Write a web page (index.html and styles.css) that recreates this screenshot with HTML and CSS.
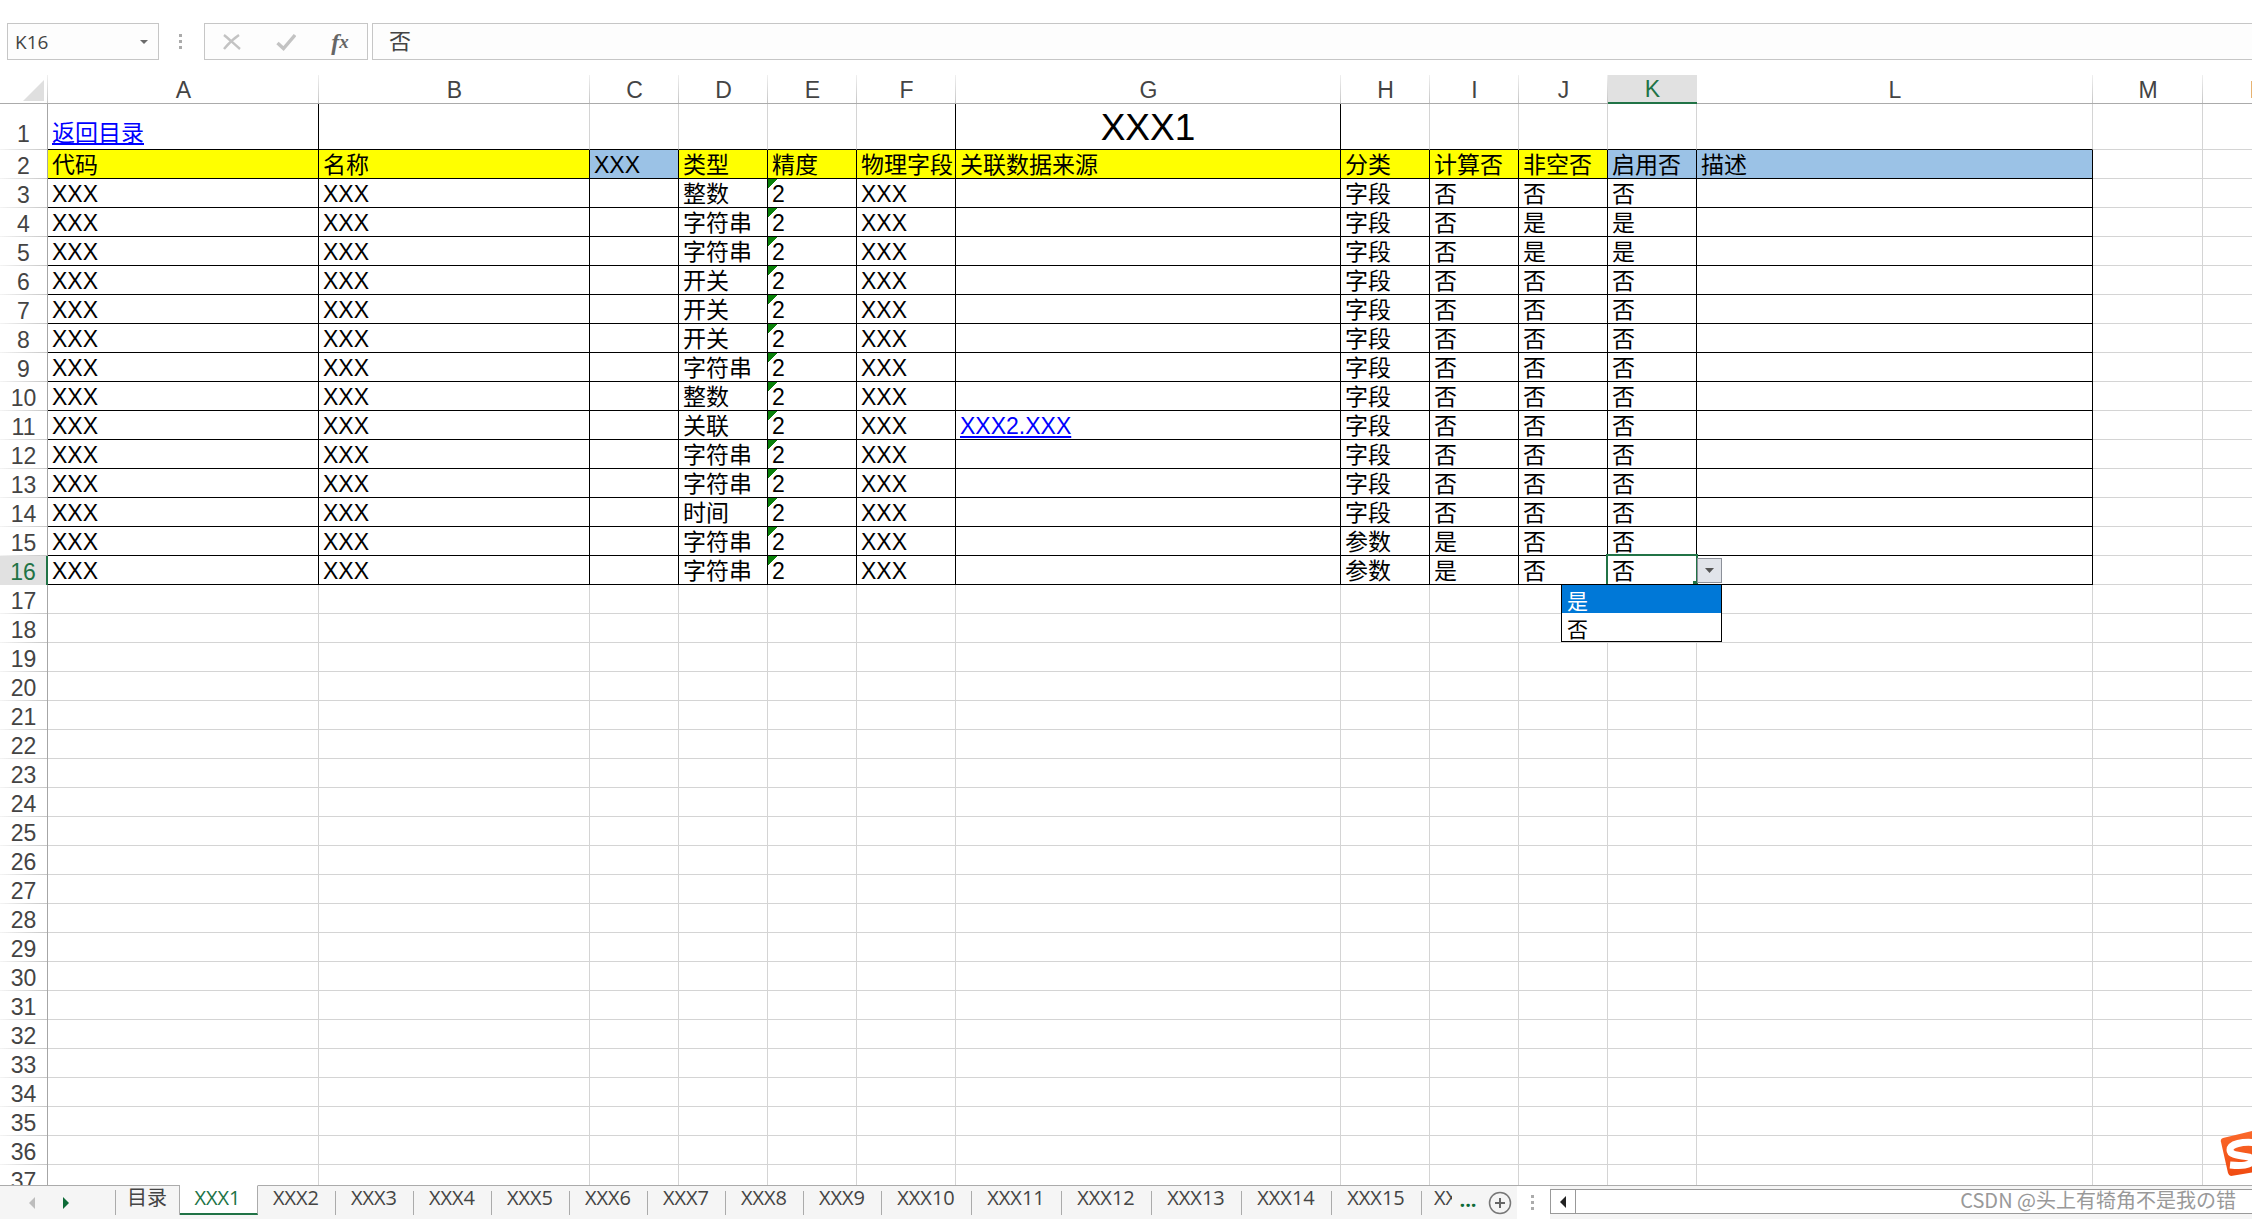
FILE: index.html
```html
<!DOCTYPE html>
<html lang="zh-CN">
<head>
<meta charset="utf-8">
<title>XXX1</title>
<link rel="stylesheet" href="styles.css">
</head>
<body>
<header class="formula-bar">
  <div class="name-box">
    <input class="name-input" type="text" value="K16" aria-label="名称框">
    <button class="name-toggle" type="button" aria-label="名称列表"><svg width="8" height="4" viewBox="0 0 8 4"><path d="M0 0h8L4 4z" fill="#6b6b6b"/></svg></button>
  </div>
  <div class="grip"><i></i><i></i><i></i></div>
  <div class="fx-buttons">
    <button class="fx-button" type="button" aria-label="取消"><svg width="20" height="18" viewBox="0 0 20 18"><path d="M2 2c5 4 10 9 16 14M17 2C11 6 6 11 2 16" fill="none" stroke="#c3c3c3" stroke-width="2.4"/></svg></button>
    <button class="fx-button" type="button" aria-label="输入"><svg width="20" height="18" viewBox="0 0 20 18"><path d="M1.500 10l6 5.500L19 2" fill="none" stroke="#c3c3c3" stroke-width="3.400"/></svg></button>
    <button class="fx-button fx-label" type="button" aria-label="插入函数">f<span class="fx-x">x</span></button>
  </div>
  <input class="formula-input" type="text" value="否" aria-label="编辑栏">
</header>

<main class="sheet">
  <table class="grid">
    <colgroup>
      <col class="w-head"><col class="w-text"><col class="w-text"><col class="w-flag"><col class="w-flag"><col class="w-flag"><col class="w-field"><col class="w-source"><col class="w-flag"><col class="w-flag"><col class="w-flag"><col class="w-flag"><col class="w-note"><col class="w-free"><col class="w-free">
    </colgroup>
    <thead><tr id="letters"></tr></thead>
    <tbody id="rows"></tbody>
  </table>
  <svg class="ime-logo" width="32" height="46" viewBox="0 0 32 46" aria-hidden="true">
    <defs><linearGradient id="ime" x1="0" y1="0" x2="0" y2="1"><stop offset="0" stop-color="#fb6a2c"/><stop offset="1" stop-color="#f04a10"/></linearGradient></defs>
    <path d="M3 8L40 -1V41L11 46Q9 46 8 43L1 12Q0 9 3 8z" fill="url(#ime)"/>
    <path d="M38 13C22 11 10 14 10 20C10 28 32 24 32 30C32 36 20 36 10 35" fill="none" stroke="#fff" stroke-width="7"/>
  </svg>
</main>

<footer class="bottom-bar">
  <nav class="tabs" aria-label="工作表">
    <div class="tab-arrows">
      <button class="plain" type="button" aria-label="上一个"><svg width="6" height="12" viewBox="0 0 6 12"><path d="M6 0v12L0 6z" fill="#bdbdbd"/></svg></button>
      <button class="plain" type="button" aria-label="下一个"><svg width="6" height="12" viewBox="0 0 6 12"><path d="M0 0v12l6-6z" fill="#0e6b38"/></svg></button>
    </div>
    <div class="tab-list" id="tabs"></div>
    <button class="plain more" type="button">...</button>
    <button class="plain add" type="button" aria-label="新工作表"><svg width="24" height="24" viewBox="0 0 24 24"><circle cx="12" cy="12" r="10.500" fill="none" stroke="#777" stroke-width="1.500"/><path d="M12 7v10M7 12h10" stroke="#666" stroke-width="2"/></svg></button>
  </nav>
  <div class="grip split"><i></i><i></i><i></i></div>
  <div class="scroll">
    <button class="scroll-left" type="button" aria-label="向左滚动"><svg width="6" height="12" viewBox="0 0 6 12"><path d="M6 0v12L0 6z" fill="#222"/></svg></button>
    <span class="watermark">CSDN @头上有犄角不是我の错</span>
  </div>
</footer>
<script src="sheet.js"></script>
</body>
</html>
```
FILE: styles.css
```css
* { box-sizing: border-box; }

body {
  margin: 0;
  height: 100vh;
  display: flex;
  flex-direction: column;
  overflow: hidden;
  background: #fff;
  color: #444;
  font-family: "Liberation Sans", "Noto Sans CJK SC", sans-serif;
}

button, input, select { font: inherit; color: inherit; margin: 0; padding: 0; border: 0; background: none; outline: 0; }
button { display: flex; align-items: center; justify-content: center; }
svg { display: block; }

/* formula bar */
.formula-bar {
  flex: none;
  display: flex;
  padding: 23px 0 15px 7px;
  font-family: "Open Sans", "Noto Sans CJK SC", sans-serif;
}
.name-box, .fx-buttons, .formula-input { height: 37px; border: 1px solid #c6c6c6; background: #fdfdfd; }
.name-box { width: 152px; display: flex; }
.name-input { flex: 1; min-width: 0; padding-left: 7px; font-size: 19px; }
.name-toggle { width: 28px; }
.grip { width: 45px; padding-right: 2px; display: flex; flex-direction: column; align-items: center; justify-content: center; gap: 3px; }
.grip i { width: 3px; height: 3px; background: #ababab; }
.fx-buttons { width: 164px; display: flex; }
.fx-button { flex: 1; }
.fx-label { font: italic bold 24px/24px "Liberation Serif", serif; color: #666; }
.fx-x { font-size: 19px; }
.formula-input { flex: 1; min-width: 0; margin-left: 4px; border-right: 0; padding: 0 0 5px 16px; font-size: 22px; }

/* grid */
.sheet { flex: 1; min-height: 0; overflow: hidden; position: relative; }
.grid { table-layout: fixed; width: 2313px; border-collapse: separate; border-spacing: 0; }
.w-head { width: 48px; }
.w-text { width: 271px; }
.w-flag { width: 89px; }
.w-field { width: 99px; }
.w-source { width: 385px; }
.w-note { width: 396px; }
.w-free { width: 110px; }

.grid th, .grid td { height: 29px; padding: 2px 0 0; white-space: nowrap; line-height: 26px; font-size: 23px; }
.grid th { font-weight: 400; text-align: center; }
.grid thead th {
  border-bottom: 1px solid #ababab;
  background: linear-gradient(#f0f0f0, #c6c6c6) right / 1px 100% no-repeat;
}
.corner svg { margin-left: 23px; }
.grid tbody th {
  border-right: 1px solid #a6a6a6;
  background: linear-gradient(to right, #f4f4f4, #c6c6c6) bottom / 100% 1px no-repeat;
}
.grid thead .current { background: #e1e1e1; color: #217346; border-bottom: 2px solid #217346; line-height: 25px; }
.grid tbody .current { background: #e1e1e1; color: #217346; border-right: 2px solid #217346; }

.grid td {
  padding-left: 4px;
  border-right: 1px solid #d4d4d4;
  border-bottom: 1px solid #d4d4d4;
  color: #000;
}
.grid .edge-b { border-bottom-color: #000; }
.grid .edge-r { border-right-color: #000; }
.grid .key { background: #ff0; }
.grid .extra { background: #9bc2e6; }
.grid .top th, .grid .top td { height: 46px; vertical-align: bottom; padding-bottom: 3px; }
.grid .top .title { vertical-align: middle; text-align: center; padding: 2px 0 0; font-size: 37px; line-height: 42px; }
.grid a { color: #00f; text-decoration: underline 2px; text-underline-offset: 2px; }
.grid .text-number { background: linear-gradient(135deg, #0a800a 7px, transparent 7px) no-repeat; }

/* active cell and its open list */
.grid .active { position: relative; }
.frame { position: absolute; inset: -2px -2px 0 -2px; border: 2px solid #217346; border-bottom: 0; }
.handle { position: absolute; right: -2px; bottom: 0; width: 5px; height: 3px; background: #217346; }
.open-list {
  position: absolute; left: 89px; top: 2px; width: 25px; height: 25px;
  border: 1px solid #8c9099; background: #e1e4ea;
}
.choices {
  position: absolute; left: -47px; top: 28px; z-index: 1;
  width: 161px; height: 58px;
  appearance: none; overflow: hidden;
  border: 1px solid #000; border-radius: 0; background: #fff;
  font-size: 21px; color: #000;
}
.choices option { height: 28px; min-height: 28px; line-height: 24px; padding: 0 0 4px 5px; }
.choices option:checked { background: #0078d7 linear-gradient(#0078d7, #0078d7); -webkit-text-fill-color: #fff; }

.ime-logo { position: absolute; right: 0; bottom: 9px; }

/* sheet tabs and scroll bar */
.bottom-bar { flex: none; height: 34px; display: flex; border-top: 1px solid #ababab; background: #f5f5f5; }
.tabs { flex: none; display: flex; font-family: "Open Sans", "Noto Sans CJK SC", sans-serif; font-size: 20px; }
.tab-arrows { width: 115px; display: flex; gap: 28px; padding-left: 29px; }
.tab-list { width: 1337px; display: flex; overflow: hidden; margin-top: -1px; }
.tab {
  flex: none; width: 78px; height: 30px; padding-right: 2px; display: block;
  line-height: 24px; text-align: center; text-decoration: none; color: #444;
  background: linear-gradient(#ababab, #ababab) right 5px / 1px 25px no-repeat;
  border-top: 1px solid #ababab;
}
.tab.wide { width: 90px; }
.tab.cut { width: 30px; padding: 0 0 0 12px; background: none; text-align: left; }
.tab.index { width: 65px; padding: 0; background: linear-gradient(#ababab, #ababab) left 4px / 1px 25px no-repeat; border-right: 1px solid #ababab; }
.tab.on { color: #217346; background: #fff; border-top-color: #fff; border-right: 1px solid #ababab; border-bottom: 2px solid #217346; }
.plain { flex: none; }
.more { width: 32px; padding-bottom: 6px; color: #0e6b38; font-weight: 700; }
.add { width: 33px; padding-right: 1px; }
.split { width: 33px; background: #fff; }
.scroll {
  flex: 1; min-width: 0; height: 25px; margin-top: 3px; display: flex; align-items: center; justify-content: space-between;
  border: 1px solid #999; border-right: 0; background: #fff; padding-right: 16px;
}
.scroll-left { width: 25px; height: 23px; border-right: 1px solid #999; }
.watermark { font-size: 20px; line-height: 23px; padding-bottom: 4px; color: #999; font-family: "Noto Sans CJK SC", sans-serif; }
```
FILE: sheet.js
```js
const LETTERS = "ABCDEFGHIJKLMN".split("");
const ROW_COUNT = 37;
const LAST_COL = 11; // column L closes the bordered table
const HEADINGS = ["代码", "名称", "XXX", "类型", "精度", "物理字段", "关联数据来源", "分类", "计算否", "非空否", "启用否", "描述"];
const EXTRA = [2, 10, 11];

// type, category, calculated, required, enabled
const FIELDS = [
  ["整数", "字段", "否", "否", "否"],
  ["字符串", "字段", "否", "是", "是"],
  ["字符串", "字段", "否", "是", "是"],
  ["开关", "字段", "否", "否", "否"],
  ["开关", "字段", "否", "否", "否"],
  ["开关", "字段", "否", "否", "否"],
  ["字符串", "字段", "否", "否", "否"],
  ["整数", "字段", "否", "否", "否"],
  ["关联", "字段", "否", "否", "否"],
  ["字符串", "字段", "否", "否", "否"],
  ["字符串", "字段", "否", "否", "否"],
  ["时间", "字段", "否", "否", "否"],
  ["字符串", "参数", "是", "否", "否"],
  ["字符串", "参数", "是", "否", "否"]
];

const PICKER = `<span class="frame"></span><span class="handle"></span>
<button class="open-list" type="button" aria-label="打开列表"><svg width="9" height="5" viewBox="0 0 9 5"><path d="M0 0h9L4.500 5z" fill="#555"/></svg></button>
<select class="choices" size="2" aria-label="启用否"><option selected>是</option><option>否</option></select>`;

function cell(row, col) {
  const classes = [];
  let html = "";
  if (row === 1) {
    if (col <= LAST_COL) classes.push("edge-b");
    if ([0, 5, 6].includes(col)) classes.push("edge-r");
    if (col === 0) html = '<a href="#index">返回目录</a>';
    if (col === 6) { html = "XXX1"; classes.push("title"); }
  } else if (row <= 16 && col <= LAST_COL) {
    classes.push("edge-b", "edge-r");
    if (row === 2) {
      html = HEADINGS[col];
      classes.push(EXTRA.includes(col) ? "extra" : "key");
    } else {
      const f = FIELDS[row - 3];
      const source = row === 11 ? '<a href="#XXX2">XXX2.XXX</a>' : "";
      html = ["XXX", "XXX", "", f[0], "2", "XXX", source, f[1], f[2], f[3], f[4], ""][col];
      if (col === 4) classes.push("text-number");
      if (row === 16 && col === 10) { html += PICKER; classes.push("active"); }
    }
  }
  return `<td class="${classes.join(" ")}">${html}</td>`;
}

document.getElementById("letters").innerHTML =
  '<th class="corner"><svg width="21" height="21" viewBox="0 0 21 21"><path d="M21 0v21H0z" fill="#dfdfdf"/></svg></th>' +
  LETTERS.map(l => `<th scope="col"${l === "K" ? ' class="current"' : ""}>${l}</th>`).join("");

let body = "";
for (let row = 1; row <= ROW_COUNT; row++) {
  body += `<tr${row === 1 ? ' class="top"' : ""}><th scope="row"${row === 16 ? ' class="current"' : ""}>${row}</th>`;
  body += LETTERS.map((_, col) => cell(row, col)).join("") + "</tr>";
}
document.getElementById("rows").innerHTML = body;

let tabs = '<a class="tab index" href="#index">目录</a>';
for (let n = 1; n <= 15; n++) {
  tabs += `<a class="tab${n === 1 ? " on" : ""}${n > 9 ? " wide" : ""}" href="#XXX${n}">XXX${n}</a>`;
}
tabs += '<a class="tab cut" href="#XXX16">XX</a>';
document.getElementById("tabs").innerHTML = tabs;
```
